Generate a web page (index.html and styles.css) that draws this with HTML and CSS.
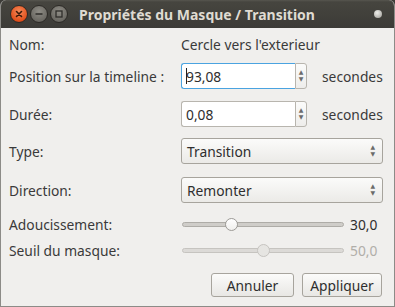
FILE: index.html
```html
<!DOCTYPE html>
<html>
<head>
<meta charset="utf-8">
<link rel="stylesheet" href="styles.css">
</head>
<body>
<div class="window">
  <div class="titlebar">
    <div class="wbtns">
      <span class="wbtn close"><svg width="16" height="16" viewBox="0 0 16 16"><path d="M5.5 5.5 L10.5 10.5 M10.5 5.5 L5.5 10.5" stroke="#3a1a0a" stroke-width="1.6" stroke-linecap="round"/></svg></span>
      <span class="wbtn grey"><svg width="16" height="16" viewBox="0 0 16 16"><path d="M4.5 8 H11.5" stroke="#2e2d2a" stroke-width="1.6"/></svg></span>
      <span class="wbtn grey"><svg width="16" height="16" viewBox="0 0 16 16"><rect x="5" y="5" width="6" height="6" fill="none" stroke="#2e2d2a" stroke-width="1.3"/></svg></span>
    </div>
    <div class="title">Propriétés du Masque / Transition</div>
    <span class="dot"></span>
  </div>
  <div class="content">
    <div class="lbl">Nom:</div>
    <div class="val">Cercle vers l'exterieur</div>

    <div class="lbl">Position sur la timeline :</div>
    <div class="ctl spinrow">
      <div class="spin focus"><span class="entry"><span class="caret"></span>93,08</span><span class="arrows"><i>▲</i><i>▼</i></span></div>
      <span class="unit">secondes</span>
    </div>

    <div class="lbl">Durée:</div>
    <div class="ctl spinrow">
      <div class="spin"><span class="entry">0,08</span><span class="arrows"><i>▲</i><i>▼</i></span></div>
      <span class="unit">secondes</span>
    </div>

    <div class="lbl">Type:</div>
    <div class="ctl"><div class="combo"><span>Transition</span><span class="carrows"><i>▲</i><i>▼</i></span></div></div>

    <div class="lbl">Direction:</div>
    <div class="ctl"><div class="combo"><span>Remonter</span><span class="carrows"><i>▲</i><i>▼</i></span></div></div>

    <div class="lbl">Adoucissement:</div>
    <div class="ctl sliderrow">
      <div class="trough"><span class="knob" style="left:30%"></span></div>
      <span class="sval">30,0</span>
    </div>

    <div class="lbl">Seuil du masque:</div>
    <div class="ctl sliderrow disabled">
      <div class="trough"><span class="knob" style="left:50%"></span></div>
      <span class="sval">50,0</span>
    </div>

    <div class="buttons">
      <button class="btn annuler">Annuler</button>
      <button class="btn appliquer">Appliquer</button>
    </div>
  </div>
</div>
</body>
</html>
```
FILE: styles.css
```css
* { box-sizing: border-box; }
html, body { margin: 0; padding: 0; }
body {
  width: 395px; height: 307px; overflow: hidden;
  background: #3c3b37;
  font-family: "Noto Sans", "DejaVu Sans", sans-serif;
  font-size: 13.8px;
  color: #3a3a3a;
}
.window {
  width: 395px; height: 307px;
  border-radius: 6px 6px 0 0;
  overflow: hidden;
  display: flex; flex-direction: column;
  background: #f0efed;
  border: 1px solid #8c8b87;
  border-top: none;
}
.titlebar {
  height: 28px; flex: none;
  background: linear-gradient(#57564f 0, #46453f 2px, #3c3b37 100%);
  display: flex; align-items: center;
  position: relative;
  margin: 0 -1px;
}
.wbtns { display: flex; gap: 2px; margin-left: 10px; }
.wbtn {
  width: 18px; height: 18px; border-radius: 50%;
  display: flex; align-items: center; justify-content: center;
}
.wbtn.close { background: radial-gradient(circle at 50% 35%, #f58a5a, #e1501c 70%, #b2391a); border: 1px solid #2d2b27; }
.wbtn.grey { background: radial-gradient(circle at 50% 35%, #8e8c85, #6b6963 70%, #57554f); border: 1px solid #2d2b27; }
.title {
  flex: 1; text-align: center;
  color: #dfdbd2; font-weight: bold; font-size: 14px;
  font-family: "Noto Sans", "DejaVu Sans", sans-serif;
  margin-left: -48px;
  margin-top: 1px;
}
.dot {
  width: 8px; height: 8px; border-radius: 50%;
  background: radial-gradient(circle at 40% 35%, #eeeeea, #9d9b95);
  margin-right: 13px;
}
.content {
  flex: 1;
  display: grid;
  grid-template-columns: 172px 202px;
  grid-template-rows: 32px 32px 44px 30px 48px 20px 32px 38px;
  padding-left: 8px;
}
.lbl, .val { display: flex; align-items: center; white-space: nowrap; }
.ctl { display: flex; align-items: center; }
.spinrow .spin { display: flex; width: 126px; height: 26px; flex: none; }
.entry {
  flex: 1; display: flex; align-items: center;
  background: #fff; border: 1px solid #b8b5ae; border-right: none;
  border-radius: 3px 0 0 3px; padding-left: 4px; color: #2e2e2e;
  position: relative;
}
.spin.focus .entry { border-color: #4aa3e0; }
.caret { width: 1px; height: 16px; background: #222; position: absolute; left: 4px; top: 4px; }
.arrows {
  width: 12px; display: flex; flex-direction: column; justify-content: center; align-items: center;
  border: 1px solid #b8b5ae; border-radius: 0 3px 3px 0;
  background: linear-gradient(#fbfbfa, #eeedeb);
}
.arrows i, .carrows i { font-style: normal; font-size: 6px; line-height: 7px; color: #6b6b6b; }
.unit { margin-left: 15px; white-space: nowrap; }
.combo {
  width: 202px; height: 26px;
  border: 1px solid #a7a49d; border-radius: 3px;
  background: linear-gradient(#fbfbfa, #ebeae7);
  display: flex; align-items: center; justify-content: space-between;
  padding: 0 7px 0 5px; color: #2e2e2e;
}
.carrows { display: flex; flex-direction: column; align-items: center; }
.sliderrow { padding-left: 1px; }
.trough {
  width: 162px; height: 5px; border-radius: 3px; flex: none;
  background: #cfcdc9; border: 1px solid #aeaca7;
  position: relative;
}
.knob {
  position: absolute; top: -5px;
  width: 13px; height: 13px; margin-left: -6px;
  border-radius: 50%; border: 1px solid #9d9b97;
  background: linear-gradient(#ffffff, #f0efed);
}
.sval { margin-left: 6px; color: #2e2e2e; }
.disabled .trough { background: #dcdad7; border-color: #c6c4c0; }
.disabled .knob { background: #e6e5e2; border-color: #c6c4c0; }
.disabled .sval { color: #b0aea9; }
.buttons {
  grid-column: 1 / 3;
  display: flex; justify-content: flex-end; align-items: center;
  gap: 8px; padding-right: 1px;
}
.btn {
  font: inherit; color: #2e2e2e;
  height: 24px; padding: 0;
  border: 1px solid #a7a49d; border-radius: 3px;
  background: linear-gradient(#fbfbfa, #e8e7e4);
}
.annuler { width: 83px; }
.appliquer { width: 80px; }
```
